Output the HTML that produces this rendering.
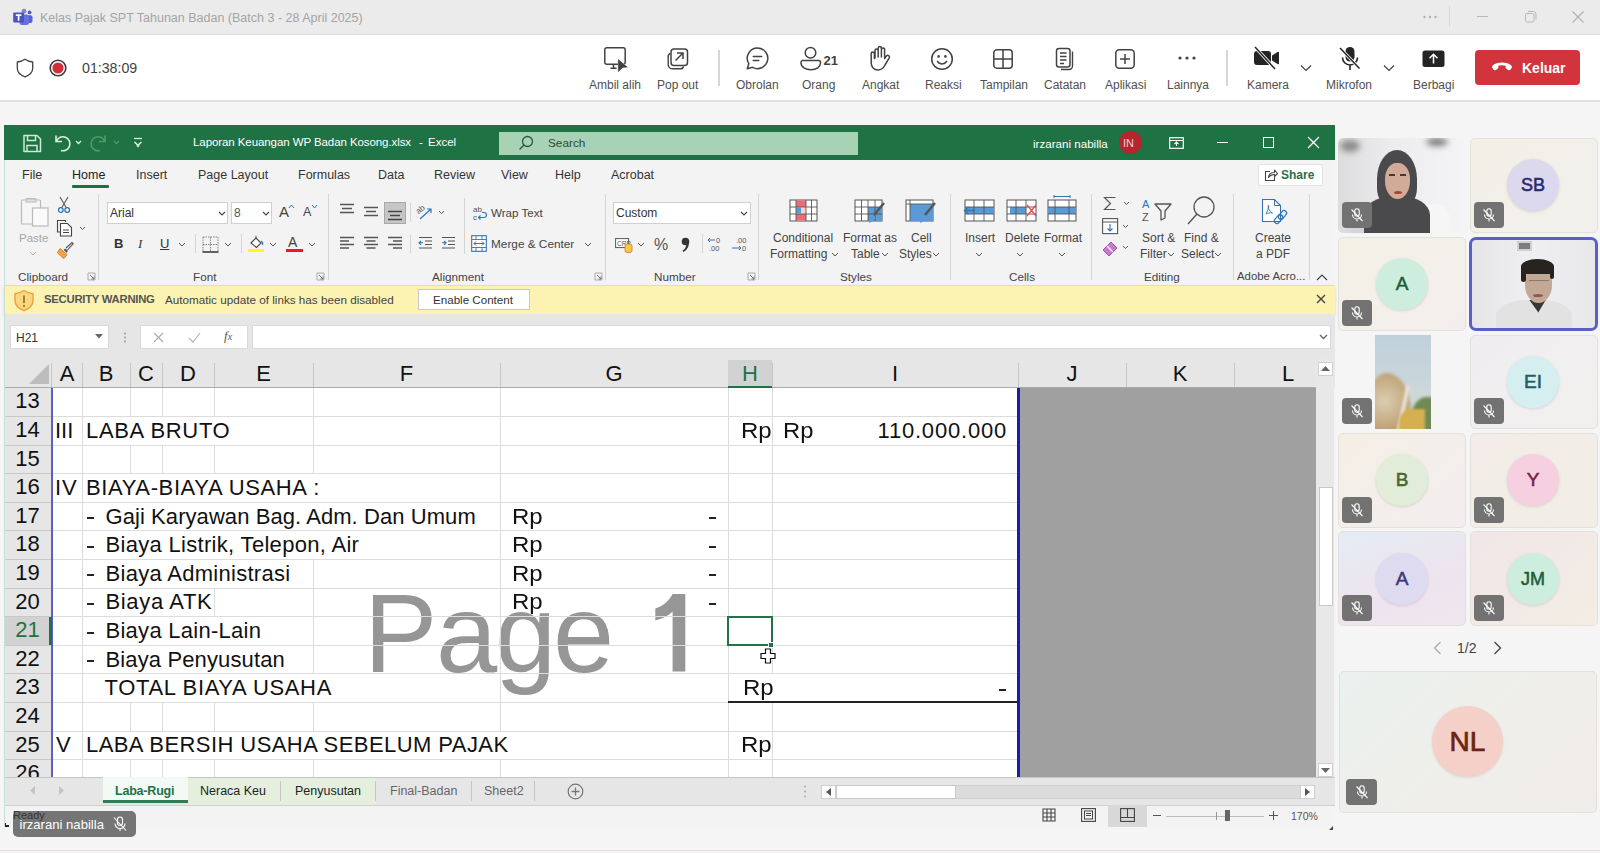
<!DOCTYPE html>
<html><head><meta charset="utf-8">
<style>
*{margin:0;padding:0;box-sizing:border-box}
html,body{width:1600px;height:853px;overflow:hidden;background:#f5f5f5;font-family:"Liberation Sans",sans-serif;position:relative}
.a{position:absolute}
.t{position:absolute;white-space:nowrap;line-height:1}
svg{position:absolute;overflow:visible}
</style></head><body>
<!-- Teams title bar -->
<div class="a" style="left:0;top:0;width:1600px;height:34px;background:#ebebeb"></div>
<!-- Teams toolbar -->
<div class="a" style="left:0;top:34px;width:1600px;height:68px;background:#fff;border-top:1px solid #dcdcdc;border-bottom:2px solid #e2e2e2"></div>


<!-- ===== TEAMS HEADER ===== -->
<svg style="left:12px;top:8px" width="22" height="18" viewBox="0 0 22 18">
 <circle cx="17.6" cy="4.4" r="1.9" fill="#5059c9"/>
 <rect x="14.5" y="7.3" width="6" height="7.6" rx="2" fill="#5a62d0"/>
 <circle cx="12" cy="3.2" r="2.4" fill="#7b83eb"/>
 <rect x="7.5" y="6.5" width="9.5" height="10.5" rx="2.5" fill="#6870e0"/>
 <rect x="1.2" y="4.5" width="10.8" height="10" rx="1" fill="#4b53bc"/>
 <path d="M3.8 7.2h5.6M6.6 7.2v5.6" stroke="#fff" stroke-width="1.7"/>
</svg>
<div class="t" style="left:40px;top:12px;font-size:12.5px;color:#a4a4a4">Kelas Pajak SPT Tahunan Badan (Batch 3 - 28 April 2025)</div>
<!-- window controls -->
<svg style="left:1423px;top:15px" width="16" height="4"><circle cx="1.5" cy="2" r="1.2" fill="#b0b0b0"/><circle cx="7" cy="2" r="1.2" fill="#b0b0b0"/><circle cx="12.5" cy="2" r="1.2" fill="#b0b0b0"/></svg>
<div class="a" style="left:1449px;top:6px;width:1px;height:21px;background:#d8d8d8"></div>
<div class="a" style="left:1477px;top:16px;width:11px;height:1px;background:#b8b8b8"></div>
<svg style="left:1524px;top:10px" width="14" height="14" viewBox="0 0 14 14"><rect x="1.5" y="3.5" width="8.5" height="8.5" rx="1.5" fill="none" stroke="#b8b8b8"/><path d="M4 1.5h5.5a2.5 2.5 0 0 1 2.5 2.5v5.5" fill="none" stroke="#b8b8b8"/></svg>
<svg style="left:1571px;top:10px" width="14" height="14" viewBox="0 0 14 14"><path d="M1.5 1.5l11 11M12.5 1.5l-11 11" stroke="#b0b0b0" stroke-width="1.1"/></svg>

<!-- left: shield, record, time -->
<svg style="left:16px;top:58px" width="18" height="20" viewBox="0 0 18 20"><path d="M9 1.2C6.5 3 4 3.8 1.3 4v6.3c0 4 3 6.8 7.7 8.5 4.7-1.7 7.7-4.5 7.7-8.5V4C14 3.8 11.5 3 9 1.2z" fill="none" stroke="#424242" stroke-width="1.3" stroke-linejoin="round"/></svg>
<svg style="left:48px;top:58px" width="20" height="20" viewBox="0 0 20 20"><circle cx="10" cy="10" r="7.8" fill="none" stroke="#3a3a3a" stroke-width="1.6"/><circle cx="10" cy="10" r="5.6" fill="#d32f3a"/></svg>
<div class="t" style="left:82px;top:61px;font-size:14.2px;color:#424242">01:38:09</div>

<!-- toolbar items -->
<!-- Ambil alih -->
<svg style="left:603px;top:46px" width="26" height="26" viewBox="0 0 26 26">
 <rect x="1.8" y="1.8" width="20.4" height="16.4" rx="2" fill="none" stroke="#424242" stroke-width="1.5"/>
 <path d="M7.5 22.3h6M10.5 18.5v3.8" stroke="#424242" stroke-width="1.5"/>
 <path d="M14.5 12L25.5 21.5l-5.3.3-4.8 4.6z" fill="#fff"/><path d="M15.3 13.6L24.2 21.1l-4.3.3-4.6 4.2z" fill="#424242" stroke="#424242" stroke-width="0.6" stroke-linejoin="round"/>
</svg>
<div class="t" style="left:589px;top:79px;font-size:12px;color:#505050">Ambil alih</div>
<!-- Pop out -->
<svg style="left:666px;top:47px" width="24" height="24" viewBox="0 0 24 24">
 <path d="M4.5 6.5a3 3 0 0 0-2.3 3v8.3a4 4 0 0 0 4 4h8.3a3 3 0 0 0 3-2.3" fill="none" stroke="#424242" stroke-width="1.4"/>
 <rect x="5" y="2" width="16.5" height="16.5" rx="3" fill="none" stroke="#424242" stroke-width="1.5"/>
 <path d="M9.5 13.5l7.5-7.5M11 6h6v6" fill="none" stroke="#424242" stroke-width="1.5"/>
</svg>
<div class="t" style="left:657px;top:79px;font-size:12px;color:#505050">Pop out</div>
<div class="a" style="left:718px;top:50px;width:1.5px;height:36px;background:#d6d6d6"></div>
<!-- Obrolan -->
<svg style="left:745px;top:46px" width="25" height="25" viewBox="0 0 25 25">
 <path d="M12.5 2a10.3 10.3 0 1 1-5 19.3L2.3 22.7l1.5-5A10.3 10.3 0 0 1 12.5 2z" fill="none" stroke="#424242" stroke-width="1.5" stroke-linejoin="round"/>
 <path d="M8.3 10.5h8.4M8.3 14.5h5.4" stroke="#424242" stroke-width="1.5" stroke-linecap="round"/>
</svg>
<div class="t" style="left:736px;top:79px;font-size:12px;color:#505050">Obrolan</div>
<!-- Orang -->
<svg style="left:800px;top:46px" width="22" height="25" viewBox="0 0 22 25">
 <circle cx="10.5" cy="6.8" r="5.3" fill="none" stroke="#424242" stroke-width="1.5"/>
 <path d="M2.5 14.5h16a2 2 0 0 1 2 2v0.5c0 4-4 6.8-9.5 6.8S1 21 1 17v-0.5a2 2 0 0 1 1.5-2z" fill="none" stroke="#424242" stroke-width="1.5"/>
</svg>
<div class="t" style="left:823.5px;top:53.5px;font-size:13px;font-weight:700;color:#424242">21</div>
<div class="t" style="left:802px;top:79px;font-size:12px;color:#505050">Orang</div>
<!-- Angkat -->
<svg style="left:869px;top:45px" width="22" height="27" viewBox="0 0 22 27">
 <path d="M6 13V5.5a1.6 1.6 0 0 1 3.2 0V12M9.2 12V3a1.6 1.6 0 0 1 3.2 0v9M12.4 12V4.5a1.6 1.6 0 0 1 3.2 0V13.5M15.6 13.5l1.8-2.6a1.7 1.7 0 0 1 2.8 1.9L16 20c-1.5 3-3.8 5-7 5-4 0-6.8-3-6.8-7V8.5a1.6 1.6 0 0 1 3.2 0v5" fill="none" stroke="#424242" stroke-width="1.5" stroke-linejoin="round" stroke-linecap="round"/>
</svg>
<div class="t" style="left:862px;top:79px;font-size:12px;color:#505050">Angkat</div>
<!-- Reaksi -->
<svg style="left:930px;top:47px" width="24" height="24" viewBox="0 0 24 24">
 <circle cx="12" cy="12" r="10.3" fill="none" stroke="#424242" stroke-width="1.5"/>
 <circle cx="8.6" cy="9.4" r="1.3" fill="#424242"/><circle cx="15.4" cy="9.4" r="1.3" fill="#424242"/>
 <path d="M7.5 14.5c1 1.6 2.6 2.4 4.5 2.4s3.5-.8 4.5-2.4" fill="none" stroke="#424242" stroke-width="1.5" stroke-linecap="round"/>
</svg>
<div class="t" style="left:925px;top:79px;font-size:12px;color:#505050">Reaksi</div>
<!-- Tampilan -->
<svg style="left:992px;top:48px" width="22" height="22" viewBox="0 0 22 22">
 <rect x="1.8" y="1.8" width="18.4" height="18.4" rx="3" fill="none" stroke="#424242" stroke-width="1.5"/>
 <path d="M11 2v18M2 11h18" stroke="#424242" stroke-width="1.5"/>
</svg>
<div class="t" style="left:980px;top:79px;font-size:12px;color:#505050">Tampilan</div>
<!-- Catatan -->
<svg style="left:1055px;top:47px" width="21" height="24" viewBox="0 0 21 24">
 <path d="M17.5 4.5v14.5a3.5 3.5 0 0 1-3.5 3.5H6" fill="none" stroke="#424242" stroke-width="1.4"/>
 <rect x="1.5" y="1.5" width="13.5" height="18.5" rx="2.5" fill="none" stroke="#424242" stroke-width="1.5"/>
 <path d="M5 6h6.5M5 9.5h6.5M5 13h6.5M5 16.5h4" stroke="#424242" stroke-width="1.3"/>
</svg>
<div class="t" style="left:1044px;top:79px;font-size:12px;color:#505050">Catatan</div>
<!-- Aplikasi -->
<svg style="left:1114px;top:48px" width="22" height="22" viewBox="0 0 22 22">
 <rect x="1.8" y="1.8" width="18.4" height="18.4" rx="3.5" fill="none" stroke="#424242" stroke-width="1.5"/>
 <path d="M11 6v10M6 11h10" stroke="#424242" stroke-width="1.5"/>
</svg>
<div class="t" style="left:1105px;top:79px;font-size:12px;color:#505050">Aplikasi</div>
<!-- Lainnya -->
<svg style="left:1178px;top:55px" width="18" height="6"><circle cx="2" cy="3" r="1.6" fill="#424242"/><circle cx="9" cy="3" r="1.6" fill="#424242"/><circle cx="16" cy="3" r="1.6" fill="#424242"/></svg>
<div class="t" style="left:1167px;top:79px;font-size:12px;color:#505050">Lainnya</div>
<div class="a" style="left:1226px;top:50px;width:1.5px;height:36px;background:#d6d6d6"></div>
<!-- Kamera -->
<svg style="left:1253px;top:46px" width="27" height="24" viewBox="0 0 27 24">
 <path d="M4 5h11a3 3 0 0 1 3 3v8a3 3 0 0 1-3 3H4a3 3 0 0 1-3-3V8a3 3 0 0 1 3-3zM19 9.5l5.5-3.5a1 1 0 0 1 1.5 .8v10.4a1 1 0 0 1-1.5 .8L19 14.5z" fill="#242424"/>
 <path d="M2 1l20 22" stroke="#fff" stroke-width="3.2"/>
 <path d="M2 1l20 22" stroke="#242424" stroke-width="1.5"/>
</svg>
<div class="t" style="left:1247px;top:79px;font-size:12px;color:#505050">Kamera</div>
<svg style="left:1300px;top:64px" width="12" height="8"><path d="M1 1.5l5 5 5-5" fill="none" stroke="#424242" stroke-width="1.2"/></svg>
<!-- Mikrofon -->
<svg style="left:1338px;top:46px" width="24" height="25" viewBox="0 0 24 25">
 <rect x="7.5" y="1" width="9" height="14.5" rx="4.5" fill="#242424"/>
 <path d="M4.5 11.5a7.5 7.5 0 0 0 15 0M12 19v5" fill="none" stroke="#242424" stroke-width="1.6"/>
 <path d="M2 2l19.5 20.5" stroke="#fff" stroke-width="3.2"/>
 <path d="M2 2l19.5 20.5" stroke="#242424" stroke-width="1.5"/>
</svg>
<div class="t" style="left:1326px;top:79px;font-size:12px;color:#505050">Mikrofon</div>
<svg style="left:1383px;top:64px" width="12" height="8"><path d="M1 1.5l5 5 5-5" fill="none" stroke="#424242" stroke-width="1.2"/></svg>
<!-- Berbagi -->
<svg style="left:1422px;top:50px" width="23" height="18" viewBox="0 0 23 18">
 <rect x="0.5" y="0.5" width="22" height="16.5" rx="2.5" fill="#242424"/>
 <path d="M11.5 13.5V4.5M7.5 8.3l4-4 4 4" fill="none" stroke="#fff" stroke-width="1.5"/>
</svg>
<div class="t" style="left:1413px;top:79px;font-size:12px;color:#505050">Berbagi</div>
<!-- Keluar -->
<div class="a" style="left:1475px;top:50px;width:105px;height:35px;background:#d1343b;border-radius:4px"></div>
<svg style="left:1491px;top:61px" width="22" height="12" viewBox="0 0 22 12">
 <path d="M11 1.5c-4 0-7.5 1.2-9.3 3-.8.8-.8 2 0 3l1 1.2c.6.6 1.5.7 2.2.2l1.8-1.2c.6-.4.8-1 .7-1.7L7.2 4.8C8.4 4.4 9.6 4.2 11 4.2s2.6.2 3.8.6l-.2 1.2c-.1.7.1 1.3.7 1.7l1.8 1.2c.7.5 1.6.4 2.2-.2l1-1.2c.8-1 .8-2.2 0-3-1.8-1.8-5.3-3-9.3-3z" fill="#fff"/>
</svg>
<div class="t" style="left:1522px;top:61px;font-size:14px;font-weight:700;color:#fff">Keluar</div>

<!-- Excel window -->
<div class="a" style="left:4px;top:125px;width:1331px;height:35px;background:#1f7244"></div>
<div class="a" style="left:4px;top:160px;width:1331px;height:125px;background:#f3f3f3"></div>
<div class="a" style="left:4px;top:285px;width:1331px;height:29px;background:#fcf3b3;border-top:1px solid #e9dfa2;box-shadow:0 2px 3px rgba(0,0,0,0.13)"></div>
<div class="a" style="left:4px;top:314px;width:1331px;height:46px;background:#e6e6e6"></div>
<div class="a" style="left:4px;top:360px;width:1331px;height:28px;background:#e6e6e6"></div>


<!-- ===== EXCEL TITLE BAR ===== -->
<svg style="left:22px;top:134px" width="20" height="19" viewBox="0 0 20 19">
 <path d="M2 1.5h13l3.5 3.5v12.5h-16.5z" fill="none" stroke="#cfe8d8" stroke-width="1.5" stroke-linejoin="round"/>
 <path d="M5.5 1.5v5h8v-5M5 17.5v-6h10v6" fill="none" stroke="#cfe8d8" stroke-width="1.5"/>
</svg>
<svg style="left:53px;top:134px" width="34" height="18" viewBox="0 0 34 18">
 <path d="M3 1.5v6h6" fill="none" stroke="#dcefe3" stroke-width="1.6"/>
 <path d="M3.5 7A7 7 0 1 1 8 16.5" fill="none" stroke="#dcefe3" stroke-width="1.6"/>
 <path d="M23 7l2.5 2.5 2.5-2.5" fill="none" stroke="#dcefe3" stroke-width="1.3"/>
</svg>
<svg style="left:91px;top:134px" width="34" height="18" viewBox="0 0 34 18">
 <path d="M14 1.5v6h-6" fill="none" stroke="#4f9a6d" stroke-width="1.6"/>
 <path d="M13.5 7A7 7 0 1 0 9 16.5" fill="none" stroke="#4f9a6d" stroke-width="1.6"/>
 <path d="M23 7l2.5 2.5 2.5-2.5" fill="none" stroke="#4f9a6d" stroke-width="1.3"/>
</svg>
<svg style="left:133px;top:137px" width="10" height="12" viewBox="0 0 10 12"><path d="M1 1.5h8" stroke="#dcefe3" stroke-width="1.3"/><path d="M1.5 5l3.5 3.3L8.5 5" fill="none" stroke="#dcefe3" stroke-width="1.5"/><path d="M3 8.5h4L5 10.5z" fill="#dcefe3"/></svg>
<div class="t" style="left:193px;top:137px;font-size:11.5px;letter-spacing:-0.08px;color:#fff">Laporan Keuangan WP Badan Kosong.xlsx</div><div class="t" style="left:419px;top:137px;font-size:11.5px;color:#fff">-</div><div class="t" style="left:428px;top:137px;font-size:11.5px;color:#fff">Excel</div>
<div class="a" style="left:499px;top:132px;width:359px;height:23px;background:#a8d2b6"></div>
<svg style="left:518px;top:135px" width="16" height="16" viewBox="0 0 16 16"><circle cx="9.5" cy="6.5" r="5" fill="none" stroke="#2d5a3e" stroke-width="1.3"/><path d="M6 10l-4.5 4.5" stroke="#2d5a3e" stroke-width="1.4"/></svg>
<div class="t" style="left:548px;top:138px;font-size:11.8px;color:#2a4a36">Search</div>
<div class="t" style="left:1033px;top:138px;font-size:11.6px;color:#fff">irzarani nabilla</div>
<div class="a" style="left:1119px;top:131px;width:23px;height:23px;border-radius:50%;background:#b3262e"></div>
<div class="t" style="left:1123px;top:138px;font-size:11px;color:#f4d0d2">IN</div>
<svg style="left:1169px;top:137px" width="15" height="12" viewBox="0 0 15 12"><rect x="0.7" y="0.7" width="13.6" height="10.6" fill="none" stroke="#fff" stroke-width="1.2"/><path d="M1 3.5h13M7.5 9V5M5.5 7l2-2 2 2" fill="none" stroke="#fff" stroke-width="1.1"/></svg>
<div class="a" style="left:1217px;top:142px;width:11px;height:1.3px;background:#fff"></div>
<div class="a" style="left:1263px;top:137px;width:11px;height:11px;border:1.3px solid #fff"></div>
<svg style="left:1307px;top:136px" width="13" height="13" viewBox="0 0 13 13"><path d="M1 1l11 11M12 1l-11 11" stroke="#fff" stroke-width="1.3"/></svg>

<!-- ===== RIBBON TABS ===== -->
<div class="t" style="left:22px;top:169px;font-size:12.5px;color:#333">File</div>
<div class="t" style="left:72px;top:169px;font-size:12.5px;color:#222">Home</div>
<div class="a" style="left:72px;top:185px;width:37px;height:3px;background:#1e6f42;border-radius:1px"></div>
<div class="t" style="left:136px;top:169px;font-size:12.5px;color:#333">Insert</div>
<div class="t" style="left:198px;top:169px;font-size:12.5px;color:#333">Page Layout</div>
<div class="t" style="left:298px;top:169px;font-size:12.5px;color:#333">Formulas</div>
<div class="t" style="left:378px;top:169px;font-size:12.5px;color:#333">Data</div>
<div class="t" style="left:434px;top:169px;font-size:12.5px;color:#333">Review</div>
<div class="t" style="left:501px;top:169px;font-size:12.5px;color:#333">View</div>
<div class="t" style="left:555px;top:169px;font-size:12.5px;color:#333">Help</div>
<div class="t" style="left:611px;top:169px;font-size:12.5px;color:#333">Acrobat</div>
<div class="a" style="left:1258px;top:164px;width:65px;height:22px;background:#fff;border:1px solid #e3e3e3;border-radius:2px"></div>
<svg style="left:1264px;top:168px" width="14" height="14" viewBox="0 0 14 14"><path d="M6 3.5H1.5v9h9V9" fill="none" stroke="#444" stroke-width="1.1"/><path d="M4.5 9.5c0-3 2-5 6-5V2l3 3.5-3 3V6.5c-2.5 0-4.5 1-6 3z" fill="none" stroke="#444" stroke-width="1.1" stroke-linejoin="round"/></svg>
<div class="t" style="left:1281px;top:169px;font-size:12px;font-weight:700;color:#2c6e49">Share</div>


<!-- ===== RIBBON CONTENT ===== -->
<!-- Clipboard -->
<svg style="left:20px;top:196px" width="30" height="32" viewBox="0 0 30 32">
 <rect x="1.5" y="4" width="19" height="24" rx="1" fill="#f6f6f6" stroke="#b9b9b9" stroke-width="1.2"/>
 <path d="M7 4V2.5h8V4" fill="none" stroke="#b9b9b9" stroke-width="1.2"/><rect x="6" y="3" width="10" height="3" fill="#e0e0e0" stroke="#b9b9b9"/>
 <rect x="12.5" y="12" width="15.5" height="18" fill="#fafafa" stroke="#b9b9b9" stroke-width="1.2"/>
</svg>
<div class="t" style="left:19px;top:233px;font-size:11.5px;color:#a6a6a6">Paste</div>
<svg style="left:29px;top:251px" width="8" height="5"><path d="M1 1l3 3 3-3" fill="none" stroke="#b0b0b0" stroke-width="1"/></svg>
<svg style="left:57px;top:196px" width="14" height="17" viewBox="0 0 14 17"><path d="M3 1l6.5 11M11 1L4.5 12" stroke="#555" stroke-width="1.1"/><circle cx="3.8" cy="14" r="2.3" fill="none" stroke="#2e75b6" stroke-width="1.3"/><circle cx="10.2" cy="14" r="2.3" fill="none" stroke="#2e75b6" stroke-width="1.3"/></svg>
<svg style="left:56px;top:219px" width="30" height="18" viewBox="0 0 30 18"><path d="M4 13H1.5V1.5h8V3" fill="none" stroke="#444" stroke-width="1.1"/><path d="M4.5 4.5h7l4 4v8.5h-11z" fill="#fff" stroke="#444" stroke-width="1.1"/><path d="M7 11h6M7 13.5h6" stroke="#444"/><path d="M24 8l2.5 2.5 2.5-2.5" fill="none" stroke="#555" stroke-width="1"/></svg>
<svg style="left:56px;top:242px" width="18" height="18" viewBox="0 0 18 18"><path d="M10 6l6-5.5 1.2 1.2L11.5 8" fill="none" stroke="#555" stroke-width="1.1"/><path d="M4 6.5l7 6-3 4c-2-1-5-4-6.5-6z" fill="#f3a447" stroke="#d9822b" stroke-width="1"/><path d="M9.5 6.5l2.5 2.5-1.5 1.8-3-3z" fill="#555"/></svg>
<div class="a" style="left:98px;top:194px;width:1px;height:86px;background:#d4d4d4"></div>
<div class="t" style="left:18px;top:271px;font-size:11.7px;color:#444">Clipboard</div>
<svg style="left:87px;top:272px" width="9" height="9" viewBox="0 0 9 9"><path d="M1 8V1h7v7z" fill="none" stroke="#999" stroke-width="0.8"/><path d="M3 3l4 4M4.5 7H7V4.5" fill="none" stroke="#666" stroke-width="0.9"/></svg>

<!-- Font -->
<div class="a" style="left:107px;top:202px;width:121px;height:22px;background:#fff;border:1px solid #d0d0d0"></div>
<div class="t" style="left:110px;top:207px;font-size:12px;color:#333">Arial</div>
<svg style="left:218px;top:211px" width="8" height="5"><path d="M1 1l3 3 3-3" fill="none" stroke="#444" stroke-width="1.1"/></svg>
<div class="a" style="left:231px;top:202px;width:41px;height:22px;background:#fff;border:1px solid #d0d0d0"></div>
<div class="t" style="left:234px;top:207px;font-size:12px;color:#555">8</div>
<svg style="left:262px;top:211px" width="8" height="5"><path d="M1 1l3 3 3-3" fill="none" stroke="#444" stroke-width="1.1"/></svg>
<div class="t" style="left:279px;top:204px;font-size:15px;color:#444">A</div>
<svg style="left:288px;top:204px" width="7" height="5"><path d="M1 4l2.5-3 2.5 3" fill="none" stroke="#2e75b6" stroke-width="1"/></svg>
<div class="t" style="left:303px;top:206px;font-size:12.5px;color:#444">A</div>
<svg style="left:311px;top:204px" width="7" height="5"><path d="M1 1l2.5 3 2.5-3" fill="none" stroke="#2e75b6" stroke-width="1"/></svg>
<div class="t" style="left:114px;top:237px;font-size:13px;font-weight:700;color:#333">B</div>
<div class="t" style="left:138px;top:237px;font-size:13px;font-style:italic;color:#333;font-family:'Liberation Serif'">I</div>
<div class="t" style="left:160px;top:237px;font-size:13px;color:#333;text-decoration:underline">U</div>
<svg style="left:178px;top:242px" width="8" height="5"><path d="M1 1l3 3 3-3" fill="none" stroke="#555" stroke-width="1"/></svg>
<div class="a" style="left:195px;top:234px;width:1px;height:19px;background:#d4d4d4"></div>
<svg style="left:202px;top:236px" width="17" height="17" viewBox="0 0 17 17"><path d="M1 1h15v15M1 1v15M8.5 1v15M1 8.5h15" fill="none" stroke="#777" stroke-width="0.9" stroke-dasharray="1.5 1"/><path d="M0.5 16h16" stroke="#222" stroke-width="1.4"/></svg>
<svg style="left:224px;top:242px" width="8" height="5"><path d="M1 1l3 3 3-3" fill="none" stroke="#555" stroke-width="1"/></svg>
<div class="a" style="left:241px;top:234px;width:1px;height:19px;background:#d4d4d4"></div>
<svg style="left:248px;top:235px" width="17" height="18" viewBox="0 0 17 18"><path d="M3 8l5-5 5 5-4.5 4.5z" fill="#fff" stroke="#444" stroke-width="1.1"/><path d="M8 3V0.8" stroke="#444"/><path d="M13 6c1.5 1 2 2.5 1.5 4" fill="none" stroke="#2e75b6" stroke-width="1.2"/><rect x="0" y="14" width="16" height="3" fill="#ffff00"/></svg>
<svg style="left:269px;top:242px" width="8" height="5"><path d="M1 1l3 3 3-3" fill="none" stroke="#555" stroke-width="1"/></svg>
<div class="t" style="left:288px;top:235px;font-size:14px;color:#444">A</div>
<div class="a" style="left:286px;top:249px;width:17px;height:3px;background:#e51c23"></div>
<svg style="left:308px;top:242px" width="8" height="5"><path d="M1 1l3 3 3-3" fill="none" stroke="#555" stroke-width="1"/></svg>
<div class="t" style="left:193px;top:271px;font-size:11.7px;color:#444">Font</div>
<svg style="left:316px;top:272px" width="9" height="9" viewBox="0 0 9 9"><path d="M1 8V1h7v7z" fill="none" stroke="#999" stroke-width="0.8"/><path d="M3 3l4 4M4.5 7H7V4.5" fill="none" stroke="#666" stroke-width="0.9"/></svg>
<div class="a" style="left:328px;top:194px;width:1px;height:86px;background:#d4d4d4"></div>

<!-- Alignment -->
<svg style="left:339px;top:203px" width="16" height="11"><path d="M1 1.5h14M3 5.5h10M1 9.5h14" stroke="#555" stroke-width="1.3"/></svg>
<svg style="left:363px;top:206px" width="16" height="11"><path d="M1 1.5h14M3 5.5h10M1 9.5h14" stroke="#555" stroke-width="1.3"/></svg>
<div class="a" style="left:384px;top:202px;width:22px;height:22px;background:#c6c6c6;border:1px solid #a8a8a8"></div>
<svg style="left:387px;top:210px" width="16" height="12"><path d="M1 1.5h14M3 5.5h10M1 9.5h14" stroke="#444" stroke-width="1.3"/></svg>
<div class="a" style="left:410px;top:203px;width:1px;height:19px;background:#d4d4d4"></div>
<svg style="left:416px;top:203px" width="30" height="18" viewBox="0 0 30 18"><text x="1" y="9" font-size="8" fill="#555" font-family="Liberation Sans" transform="rotate(-40 5 8)">ab</text><path d="M4 16l11-10M11 6h4v4" fill="none" stroke="#2e75b6" stroke-width="1.2"/><path d="M23 8l2.5 2.5 2.5-2.5" fill="none" stroke="#555" stroke-width="1"/></svg>
<div class="a" style="left:464px;top:198px;width:1px;height:56px;background:#d4d4d4"></div>
<svg style="left:473px;top:205px" width="15" height="17" viewBox="0 0 15 17"><text x="0" y="7" font-size="8" fill="#555" font-family="Liberation Sans">ab</text><text x="0" y="15" font-size="8" fill="#555" font-family="Liberation Sans">c</text><path d="M6 12.5h5a2.5 2.5 0 0 0 0-5H9M7.5 10.5l-2 2 2 2" fill="none" stroke="#2e75b6" stroke-width="1.1"/></svg>
<div class="t" style="left:491px;top:207px;font-size:11.6px;color:#444">Wrap Text</div>
<svg style="left:339px;top:236px" width="16" height="14"><path d="M1 1.5h14M1 5h9M1 8.5h14M1 12h9" stroke="#555" stroke-width="1.3"/></svg>
<svg style="left:363px;top:236px" width="16" height="14"><path d="M1 1.5h14M3.5 5h9M1 8.5h14M3.5 12h9" stroke="#555" stroke-width="1.3"/></svg>
<svg style="left:387px;top:236px" width="16" height="14"><path d="M1 1.5h14M6 5h9M1 8.5h14M6 12h9" stroke="#555" stroke-width="1.3"/></svg>
<div class="a" style="left:410px;top:235px;width:1px;height:18px;background:#d4d4d4"></div>
<svg style="left:418px;top:236px" width="15" height="14"><path d="M1 1.5h13M7 5h7M7 8.5h7M1 12h13" stroke="#555" stroke-width="1.2"/><path d="M5 6.8H1M3 4.8l-2 2 2 2" fill="none" stroke="#2e75b6" stroke-width="1.1"/></svg>
<svg style="left:441px;top:236px" width="15" height="14"><path d="M1 1.5h13M7 5h7M7 8.5h7M1 12h13" stroke="#555" stroke-width="1.2"/><path d="M1 6.8h4M3 4.8l2 2-2 2" fill="none" stroke="#2e75b6" stroke-width="1.1"/></svg>
<div class="a" style="left:464px;top:235px;width:1px;height:18px;background:#d4d4d4"></div>
<svg style="left:471px;top:235px" width="16" height="17" viewBox="0 0 16 17"><rect x="0.7" y="0.7" width="14.6" height="15.6" fill="#fff" stroke="#2e75b6" stroke-width="1.1"/><path d="M1 4.5h14M1 12.5h14M5 1v3.5M11 1v3.5M5 12.5v4M11 12.5v4" stroke="#2e75b6" stroke-width="0.9"/><path d="M3 8.5h10M5 6.5l-2 2 2 2M11 6.5l2 2-2 2" fill="none" stroke="#2e75b6" stroke-width="1"/></svg>
<div class="t" style="left:491px;top:239px;font-size:11.8px;color:#444">Merge &amp; Center</div>
<svg style="left:584px;top:242px" width="8" height="5"><path d="M1 1l3 3 3-3" fill="none" stroke="#555" stroke-width="1"/></svg>
<div class="t" style="left:432px;top:271px;font-size:11.7px;color:#444">Alignment</div>
<svg style="left:594px;top:272px" width="9" height="9" viewBox="0 0 9 9"><path d="M1 8V1h7v7z" fill="none" stroke="#999" stroke-width="0.8"/><path d="M3 3l4 4M4.5 7H7V4.5" fill="none" stroke="#666" stroke-width="0.9"/></svg>
<div class="a" style="left:605px;top:194px;width:1px;height:86px;background:#d4d4d4"></div>

<!-- Number -->
<div class="a" style="left:613px;top:202px;width:138px;height:22px;background:#fff;border:1px solid #d0d0d0"></div>
<div class="t" style="left:616px;top:207px;font-size:12px;color:#333">Custom</div>
<svg style="left:740px;top:211px" width="8" height="5"><path d="M1 1l3 3 3-3" fill="none" stroke="#444" stroke-width="1.1"/></svg>
<svg style="left:615px;top:237px" width="18" height="16" viewBox="0 0 18 16"><rect x="0.6" y="1.6" width="13" height="9" fill="#fff" stroke="#555" stroke-width="1"/><text x="2" y="9" font-size="6.5" fill="#555" font-family="Liberation Sans">CRP</text><rect x="10" y="7" width="7" height="8.5" rx="2" fill="#f7c94b" stroke="#d9822b" stroke-width="0.9"/></svg>
<svg style="left:637px;top:242px" width="8" height="5"><path d="M1 1l3 3 3-3" fill="none" stroke="#555" stroke-width="1"/></svg>
<div class="t" style="left:654px;top:237px;font-size:16px;color:#555">%</div>
<svg style="left:681px;top:237px" width="10" height="16" viewBox="0 0 10 16"><circle cx="4.5" cy="4.5" r="3.8" fill="#333"/><path d="M7.8 5c.5 4-1.5 8-5.5 10l-.8-1.2c2.5-1.5 3.8-4 3.8-6.5z" fill="#333"/></svg>
<div class="a" style="left:702px;top:234px;width:1px;height:19px;background:#d4d4d4"></div>
<svg style="left:707px;top:236px" width="18" height="17" viewBox="0 0 18 17"><text x="9" y="7" font-size="7.5" fill="#555" font-family="Liberation Sans">0</text><text x="2" y="15" font-size="7.5" fill="#555" font-family="Liberation Sans">.00</text><path d="M8 4H1M3 2L1 4l2 2" fill="none" stroke="#2e75b6" stroke-width="1"/></svg>
<svg style="left:731px;top:236px" width="18" height="17" viewBox="0 0 18 17"><text x="5" y="7" font-size="7.5" fill="#555" font-family="Liberation Sans">.00</text><text x="11" y="15" font-size="7.5" fill="#555" font-family="Liberation Sans">0</text><path d="M1 12h9M8 10l2 2-2 2" fill="none" stroke="#2e75b6" stroke-width="1"/></svg>
<div class="t" style="left:654px;top:271px;font-size:11.7px;color:#444">Number</div>
<svg style="left:747px;top:272px" width="9" height="9" viewBox="0 0 9 9"><path d="M1 8V1h7v7z" fill="none" stroke="#999" stroke-width="0.8"/><path d="M3 3l4 4M4.5 7H7V4.5" fill="none" stroke="#666" stroke-width="0.9"/></svg>
<div class="a" style="left:758px;top:194px;width:1px;height:86px;background:#d4d4d4"></div>

<!-- Styles -->
<svg style="left:789px;top:199px" width="30" height="24" viewBox="0 0 30 24">
 <rect x="1" y="1" width="27" height="21" fill="#fff" stroke="#555" stroke-width="1"/>
 <rect x="7" y="1.5" width="10" height="6.5" fill="#ef6b73"/><rect x="7" y="15" width="10" height="6.5" fill="#ef6b73"/><rect x="7" y="8.5" width="5" height="6" fill="#5b9bd5"/><rect x="12" y="8.5" width="5" height="6" fill="#ef6b73" opacity=".3"/>
 <path d="M1 8h27M1 15h27M7 1v21M17 1v21M22.5 1v21" stroke="#555" stroke-width="0.9"/>
</svg>
<div class="t" style="left:773px;top:232px;font-size:12px;color:#444">Conditional</div>
<div class="t" style="left:770px;top:248px;font-size:12px;color:#444">Formatting</div>
<svg style="left:831px;top:252px" width="8" height="5"><path d="M1 1l3 3 3-3" fill="none" stroke="#555" stroke-width="1"/></svg>
<svg style="left:854px;top:199px" width="32" height="26" viewBox="0 0 32 26">
 <rect x="1" y="1" width="27" height="21" fill="#fff" stroke="#555" stroke-width="1"/>
 <rect x="14" y="8" width="14" height="14" fill="#5b9bd5"/>
 <path d="M1 8h27M1 15h27M7.5 1v21M14 1v21M21 1v21" stroke="#555" stroke-width="0.9"/>
 <path d="M30 4l-10 12" stroke="#555" stroke-width="2.5"/><path d="M19 16c-2 1-3 3-4 8 3-1 6-3 6-6z" fill="#5b9bd5"/>
</svg>
<div class="t" style="left:843px;top:232px;font-size:12px;color:#444">Format as</div>
<div class="t" style="left:851px;top:248px;font-size:12px;color:#444">Table</div>
<svg style="left:881px;top:252px" width="8" height="5"><path d="M1 1l3 3 3-3" fill="none" stroke="#555" stroke-width="1"/></svg>
<svg style="left:905px;top:199px" width="32" height="26" viewBox="0 0 32 26">
 <rect x="1" y="1" width="27" height="21" fill="#fff" stroke="#555" stroke-width="1"/>
 <rect x="5" y="5" width="23" height="17" fill="#5b9bd5"/>
 <path d="M1 5h27M5 1v21" stroke="#555" stroke-width="0.9"/>
 <path d="M30 4l-10 12" stroke="#555" stroke-width="2.5"/><path d="M19 16c-2 1-3 3-4 8 3-1 6-3 6-6z" fill="#5b9bd5"/>
</svg>
<div class="t" style="left:911px;top:232px;font-size:12px;color:#444">Cell</div>
<div class="t" style="left:899px;top:248px;font-size:12px;color:#444">Styles</div>
<svg style="left:932px;top:252px" width="8" height="5"><path d="M1 1l3 3 3-3" fill="none" stroke="#555" stroke-width="1"/></svg>
<div class="t" style="left:840px;top:271px;font-size:11.7px;color:#444">Styles</div>
<div class="a" style="left:950px;top:194px;width:1px;height:86px;background:#d4d4d4"></div>

<!-- Cells -->
<svg style="left:963px;top:199px" width="34" height="24" viewBox="0 0 34 24">
 <rect x="2" y="1" width="29" height="21" fill="#fff" stroke="#555" stroke-width="1"/>
 <rect x="2" y="8" width="29" height="7" fill="#5b9bd5"/>
 <path d="M2 8h29M2 15h29M11 1v21M21 1v21" stroke="#555" stroke-width="0.9"/>
 <path d="M12 11.5H2M5.5 8l-4 3.5 4 3.5" fill="none" stroke="#2e75b6" stroke-width="1.3"/>
</svg>
<div class="t" style="left:965px;top:232px;font-size:12px;color:#444">Insert</div>
<svg style="left:975px;top:252px" width="8" height="5"><path d="M1 1l3 3 3-3" fill="none" stroke="#555" stroke-width="1"/></svg>
<svg style="left:1006px;top:199px" width="32" height="24" viewBox="0 0 32 24">
 <rect x="1" y="1" width="29" height="21" fill="#fff" stroke="#555" stroke-width="1"/>
 <rect x="4" y="8" width="16" height="7" fill="#5b9bd5"/>
 <path d="M1 8h29M1 15h29M10 1v21M20 1v21" stroke="#555" stroke-width="0.9"/>
 <path d="M21 6l9 11M30 6l-9 11" stroke="#e8484f" stroke-width="1.3"/>
</svg>
<div class="t" style="left:1005px;top:232px;font-size:12px;color:#444">Delete</div>
<svg style="left:1016px;top:252px" width="8" height="5"><path d="M1 1l3 3 3-3" fill="none" stroke="#555" stroke-width="1"/></svg>
<svg style="left:1047px;top:195px" width="31" height="28" viewBox="0 0 31 28">
 <path d="M7 1.5h16M7 0v3M23 0v3" stroke="#2e75b6" stroke-width="1"/>
 <rect x="1" y="5" width="28" height="21" fill="#fff" stroke="#555" stroke-width="1"/>
 <rect x="1" y="12" width="28" height="7" fill="#5b9bd5"/>
 <path d="M1 12h28M1 19h28M8 5v21M22 5v21" stroke="#555" stroke-width="0.9"/>
</svg>
<div class="t" style="left:1044px;top:232px;font-size:12px;color:#444">Format</div>
<svg style="left:1058px;top:252px" width="8" height="5"><path d="M1 1l3 3 3-3" fill="none" stroke="#555" stroke-width="1"/></svg>
<div class="t" style="left:1009px;top:271px;font-size:11.7px;color:#444">Cells</div>
<div class="a" style="left:1091px;top:194px;width:1px;height:86px;background:#d4d4d4"></div>

<!-- Editing -->
<svg style="left:1103px;top:196px" width="28" height="15" viewBox="0 0 28 15"><path d="M12.5 1.5H1.5l6 6-6 6h11" fill="none" stroke="#555" stroke-width="1.2"/><path d="M21 6l2.5 2.5 2.5-2.5" fill="none" stroke="#555" stroke-width="1"/></svg>
<svg style="left:1102px;top:218px" width="28" height="16" viewBox="0 0 28 16"><rect x="0.6" y="0.6" width="15" height="15" fill="#fff" stroke="#555" stroke-width="1.1"/><path d="M0.6 4h15" stroke="#555"/><path d="M8 6v7M5.5 10.5L8 13l2.5-2.5" fill="none" stroke="#2e75b6" stroke-width="1.1"/><path d="M21 7l2.5 2.5 2.5-2.5" fill="none" stroke="#555" stroke-width="1"/></svg>
<svg style="left:1102px;top:240px" width="28" height="16" viewBox="0 0 28 16"><path d="M1 10l8-8 6 6-8 8z" fill="#c879d2" stroke="#9b4aa8" stroke-width="0.9"/><path d="M5 6l6 6" stroke="#fff" stroke-width="1.2"/><path d="M21 6l2.5 2.5 2.5-2.5" fill="none" stroke="#555" stroke-width="1"/></svg>
<svg style="left:1141px;top:197px" width="34" height="27" viewBox="0 0 34 27">
 <text x="1" y="11" font-size="11" fill="#2e75b6" font-family="Liberation Sans">A</text>
 <text x="1" y="24" font-size="11" fill="#555" font-family="Liberation Sans">Z</text>
 <path d="M14 7h16l-6 7v7l-4 2v-9z" fill="none" stroke="#555" stroke-width="1.3" stroke-linejoin="round"/>
</svg>
<div class="t" style="left:1142px;top:232px;font-size:12px;color:#444">Sort &amp;</div>
<div class="t" style="left:1140px;top:248px;font-size:12px;color:#444">Filter</div>
<svg style="left:1167px;top:252px" width="8" height="5"><path d="M1 1l3 3 3-3" fill="none" stroke="#555" stroke-width="1"/></svg>
<svg style="left:1186px;top:196px" width="32" height="30" viewBox="0 0 32 30"><circle cx="18" cy="11" r="10" fill="none" stroke="#555" stroke-width="1.3"/><path d="M11 18L2 28" stroke="#555" stroke-width="1.4"/></svg>
<div class="t" style="left:1184px;top:232px;font-size:12px;color:#444">Find &amp;</div>
<div class="t" style="left:1181px;top:248px;font-size:12px;color:#444">Select</div>
<svg style="left:1214px;top:252px" width="8" height="5"><path d="M1 1l3 3 3-3" fill="none" stroke="#555" stroke-width="1"/></svg>
<div class="t" style="left:1144px;top:271px;font-size:11.7px;color:#444">Editing</div>
<div class="a" style="left:1233px;top:194px;width:1px;height:86px;background:#d4d4d4"></div>

<!-- Adobe -->
<svg style="left:1261px;top:198px" width="28" height="30" viewBox="0 0 28 30">
 <path d="M1.5 1.5h12l6 6v16h-18z" fill="#fff" stroke="#2e75b6" stroke-width="1.1"/><path d="M13.5 1.5v6h6" fill="none" stroke="#2e75b6" stroke-width="1"/>
 <path d="M5 16c2-4 3-7 2.5-9-1 2 .5 6 4 8-2-.5-5 0-6.5 1z" fill="none" stroke="#2e75b6" stroke-width="0.9"/>
 <rect x="15" y="16" width="5" height="10" rx="2.5" transform="rotate(40 17.5 21)" fill="none" stroke="#2e75b6" stroke-width="1.2"/>
 <rect x="19" y="12" width="5" height="10" rx="2.5" transform="rotate(40 21.5 17)" fill="none" stroke="#2e75b6" stroke-width="1.2"/>
</svg>
<div class="t" style="left:1255px;top:232px;font-size:12px;color:#444">Create</div>
<div class="t" style="left:1256px;top:248px;font-size:12px;color:#444">a PDF</div>
<div class="t" style="left:1237px;top:271px;font-size:11.4px;color:#444">Adobe Acro...</div>
<div class="a" style="left:1309px;top:194px;width:1px;height:86px;background:#d4d4d4"></div>
<svg style="left:1316px;top:274px" width="12" height="7"><path d="M1 6l5-5 5 5" fill="none" stroke="#444" stroke-width="1.2"/></svg>

<!-- ===== SECURITY BAR ===== -->
<svg style="left:13px;top:289px" width="22" height="23" viewBox="0 0 22 23"><path d="M11 1.5c-3 2-6 3-9 3.2v6.5c0 5 3.5 8.5 9 10.5 5.5-2 9-5.5 9-10.5V4.7C17 4.5 14 3.5 11 1.5z" fill="#fcd580" stroke="#e8a33d" stroke-width="1.4"/><path d="M11 6.5v7.5" stroke="#8a6d1a" stroke-width="1.6"/><circle cx="11" cy="17" r="1" fill="#8a6d1a"/></svg>
<div class="t" style="left:44px;top:294px;font-size:11.3px;color:#555;font-weight:700;letter-spacing:-0.25px">SECURITY WARNING</div>
<div class="t" style="left:165px;top:294px;font-size:11.7px;color:#444">Automatic update of links has been disabled</div>
<div class="a" style="left:418px;top:289px;width:112px;height:21px;background:#fff;border:1px solid #c8c8c8"></div>
<div class="t" style="left:433px;top:294px;font-size:11.6px;color:#333">Enable Content</div>
<svg style="left:1316px;top:294px" width="10" height="10"><path d="M1 1l8 8M9 1l-8 8" stroke="#444" stroke-width="1.4"/></svg>

<!--GRID-->
<div class="a" style="left:52px;top:388px;width:966px;height:389px;background:#fff"></div>
<div class="t" style="left:364px;top:577px;font-size:110px;color:#969696;transform:scaleY(1.02);transform-origin:0 0">P</div>
<div class="t" style="left:436px;top:577px;font-size:110px;color:#969696;transform:scaleY(1.02);transform-origin:0 0">a</div>
<div class="t" style="left:495px;top:577px;font-size:110px;color:#969696;transform:scaleY(1.02);transform-origin:0 0">g</div>
<div class="t" style="left:553px;top:577px;font-size:110px;color:#969696;transform:scaleY(1.02);transform-origin:0 0">e</div>
<svg style="left:655px;top:594px" width="31" height="78" viewBox="0 0 31 78"><path d="M17.6 0H30.3V77.5H17.6V17.5C13.5 21.5 7 25 0.3 26.5V14.5C8 12 14 7 17.6 0z" fill="#969696"/></svg>
<div class="a" style="left:52px;top:415.9px;width:966px;height:1px;background:#dcdcdc"></div>
<div class="a" style="left:52px;top:444.5px;width:966px;height:1px;background:#dcdcdc"></div>
<div class="a" style="left:52px;top:473.1px;width:966px;height:1px;background:#dcdcdc"></div>
<div class="a" style="left:52px;top:501.7px;width:966px;height:1px;background:#dcdcdc"></div>
<div class="a" style="left:52px;top:530.3px;width:966px;height:1px;background:#dcdcdc"></div>
<div class="a" style="left:52px;top:558.9px;width:966px;height:1px;background:#dcdcdc"></div>
<div class="a" style="left:52px;top:587.5px;width:966px;height:1px;background:#dcdcdc"></div>
<div class="a" style="left:52px;top:616.1px;width:966px;height:1px;background:#dcdcdc"></div>
<div class="a" style="left:52px;top:644.7px;width:966px;height:1px;background:#dcdcdc"></div>
<div class="a" style="left:52px;top:673.3px;width:966px;height:1px;background:#dcdcdc"></div>
<div class="a" style="left:52px;top:701.9px;width:966px;height:1px;background:#dcdcdc"></div>
<div class="a" style="left:52px;top:730.5px;width:966px;height:1px;background:#dcdcdc"></div>
<div class="a" style="left:52px;top:759.1px;width:966px;height:1px;background:#dcdcdc"></div>
<div class="a" style="left:82px;top:387.8px;width:1px;height:389.2px;background:#dcdcdc"></div>
<div class="a" style="left:130px;top:387.8px;width:1px;height:28.6px;background:#dcdcdc"></div>
<div class="a" style="left:130px;top:445.0px;width:1px;height:28.6px;background:#dcdcdc"></div>
<div class="a" style="left:130px;top:702.4px;width:1px;height:28.6px;background:#dcdcdc"></div>
<div class="a" style="left:130px;top:759.6px;width:1px;height:17.4px;background:#dcdcdc"></div>
<div class="a" style="left:162px;top:387.8px;width:1px;height:28.6px;background:#dcdcdc"></div>
<div class="a" style="left:162px;top:445.0px;width:1px;height:28.6px;background:#dcdcdc"></div>
<div class="a" style="left:162px;top:702.4px;width:1px;height:28.6px;background:#dcdcdc"></div>
<div class="a" style="left:162px;top:759.6px;width:1px;height:17.4px;background:#dcdcdc"></div>
<div class="a" style="left:214px;top:387.8px;width:1px;height:28.6px;background:#dcdcdc"></div>
<div class="a" style="left:214px;top:445.0px;width:1px;height:28.6px;background:#dcdcdc"></div>
<div class="a" style="left:214px;top:588.0px;width:1px;height:28.6px;background:#dcdcdc"></div>
<div class="a" style="left:214px;top:702.4px;width:1px;height:28.6px;background:#dcdcdc"></div>
<div class="a" style="left:214px;top:759.6px;width:1px;height:17.4px;background:#dcdcdc"></div>
<div class="a" style="left:313px;top:387.8px;width:1px;height:85.8px;background:#dcdcdc"></div>
<div class="a" style="left:313px;top:559.4px;width:1px;height:114.4px;background:#dcdcdc"></div>
<div class="a" style="left:313px;top:702.4px;width:1px;height:28.6px;background:#dcdcdc"></div>
<div class="a" style="left:313px;top:759.6px;width:1px;height:17.4px;background:#dcdcdc"></div>
<div class="a" style="left:500px;top:387.8px;width:1px;height:343.2px;background:#dcdcdc"></div>
<div class="a" style="left:500px;top:759.6px;width:1px;height:17.4px;background:#dcdcdc"></div>
<div class="a" style="left:728px;top:387.8px;width:1px;height:389.2px;background:#dcdcdc"></div>
<div class="a" style="left:772px;top:387.8px;width:1px;height:286.0px;background:#dcdcdc"></div>
<div class="a" style="left:772px;top:702.4px;width:1px;height:74.6px;background:#dcdcdc"></div>
<div class="a" style="left:4px;top:359px;width:1312px;height:29px;background:#e6e6e6"></div>
<div class="a" style="left:4px;top:387px;width:1312px;height:1px;background:#ababab"></div>
<svg style="left:28px;top:363px" width="22" height="22" viewBox="0 0 22 22"><path d="M21 1v20H1z" fill="#bdbdbd"/></svg>
<div class="a" style="left:82px;top:363px;width:1px;height:24px;background:#c6c6c6"></div>
<div class="t" style="left:52px;top:363px;width:30px;text-align:center;font-size:22px;color:#111">A</div>
<div class="a" style="left:130px;top:363px;width:1px;height:24px;background:#c6c6c6"></div>
<div class="t" style="left:82px;top:363px;width:48px;text-align:center;font-size:22px;color:#111">B</div>
<div class="a" style="left:162px;top:363px;width:1px;height:24px;background:#c6c6c6"></div>
<div class="t" style="left:130px;top:363px;width:32px;text-align:center;font-size:22px;color:#111">C</div>
<div class="a" style="left:214px;top:363px;width:1px;height:24px;background:#c6c6c6"></div>
<div class="t" style="left:162px;top:363px;width:52px;text-align:center;font-size:22px;color:#111">D</div>
<div class="a" style="left:313px;top:363px;width:1px;height:24px;background:#c6c6c6"></div>
<div class="t" style="left:214px;top:363px;width:99px;text-align:center;font-size:22px;color:#111">E</div>
<div class="a" style="left:500px;top:363px;width:1px;height:24px;background:#c6c6c6"></div>
<div class="t" style="left:313px;top:363px;width:187px;text-align:center;font-size:22px;color:#111">F</div>
<div class="a" style="left:728px;top:363px;width:1px;height:24px;background:#c6c6c6"></div>
<div class="t" style="left:500px;top:363px;width:228px;text-align:center;font-size:22px;color:#111">G</div>
<div class="a" style="left:728px;top:359.5px;width:44px;height:28px;background:#d2d2d2"></div>
<div class="a" style="left:728px;top:386px;width:44px;height:2px;background:#217346"></div>
<div class="a" style="left:772px;top:363px;width:1px;height:24px;background:#c6c6c6"></div>
<div class="t" style="left:728px;top:363px;width:44px;text-align:center;font-size:22px;color:#217346">H</div>
<div class="a" style="left:1018px;top:363px;width:1px;height:24px;background:#c6c6c6"></div>
<div class="t" style="left:772px;top:363px;width:246px;text-align:center;font-size:22px;color:#111">I</div>
<div class="a" style="left:1126px;top:363px;width:1px;height:24px;background:#c6c6c6"></div>
<div class="t" style="left:1018px;top:363px;width:108px;text-align:center;font-size:22px;color:#111">J</div>
<div class="a" style="left:1234px;top:363px;width:1px;height:24px;background:#c6c6c6"></div>
<div class="t" style="left:1126px;top:363px;width:108px;text-align:center;font-size:22px;color:#111">K</div>
<div class="a" style="left:1316px;top:363px;width:1px;height:24px;background:#c6c6c6"></div>
<div class="t" style="left:1234px;top:363px;width:108px;text-align:center;font-size:22px;color:#111">L</div>
<div class="a" style="left:51px;top:363px;width:1px;height:24px;background:#c6c6c6"></div>
<div class="a" style="left:4px;top:388px;width:47px;height:389px;background:#e6e6e6"></div>
<div class="a" style="left:4px;top:415.9px;width:47px;height:1px;background:#c8c8c8"></div>
<div class="t" style="left:4px;top:390.4px;width:47px;text-align:center;font-size:22px;color:#111">13</div>
<div class="a" style="left:4px;top:444.5px;width:47px;height:1px;background:#c8c8c8"></div>
<div class="t" style="left:4px;top:419.0px;width:47px;text-align:center;font-size:22px;color:#111">14</div>
<div class="a" style="left:4px;top:473.1px;width:47px;height:1px;background:#c8c8c8"></div>
<div class="t" style="left:4px;top:447.6px;width:47px;text-align:center;font-size:22px;color:#111">15</div>
<div class="a" style="left:4px;top:501.7px;width:47px;height:1px;background:#c8c8c8"></div>
<div class="t" style="left:4px;top:476.2px;width:47px;text-align:center;font-size:22px;color:#111">16</div>
<div class="a" style="left:4px;top:530.3px;width:47px;height:1px;background:#c8c8c8"></div>
<div class="t" style="left:4px;top:504.8px;width:47px;text-align:center;font-size:22px;color:#111">17</div>
<div class="a" style="left:4px;top:558.9px;width:47px;height:1px;background:#c8c8c8"></div>
<div class="t" style="left:4px;top:533.4px;width:47px;text-align:center;font-size:22px;color:#111">18</div>
<div class="a" style="left:4px;top:587.5px;width:47px;height:1px;background:#c8c8c8"></div>
<div class="t" style="left:4px;top:562.0px;width:47px;text-align:center;font-size:22px;color:#111">19</div>
<div class="a" style="left:4px;top:616.1px;width:47px;height:1px;background:#c8c8c8"></div>
<div class="t" style="left:4px;top:590.6px;width:47px;text-align:center;font-size:22px;color:#111">20</div>
<div class="a" style="left:4px;top:616.6px;width:47px;height:28.6px;background:#d2d2d2"></div>
<div class="a" style="left:4px;top:644.7px;width:47px;height:1px;background:#c8c8c8"></div>
<div class="t" style="left:4px;top:619.2px;width:47px;text-align:center;font-size:22px;color:#217346">21</div>
<div class="a" style="left:4px;top:673.3px;width:47px;height:1px;background:#c8c8c8"></div>
<div class="t" style="left:4px;top:647.8px;width:47px;text-align:center;font-size:22px;color:#111">22</div>
<div class="a" style="left:4px;top:701.9px;width:47px;height:1px;background:#c8c8c8"></div>
<div class="t" style="left:4px;top:676.4px;width:47px;text-align:center;font-size:22px;color:#111">23</div>
<div class="a" style="left:4px;top:730.5px;width:47px;height:1px;background:#c8c8c8"></div>
<div class="t" style="left:4px;top:705.0px;width:47px;text-align:center;font-size:22px;color:#111">24</div>
<div class="a" style="left:4px;top:759.1px;width:47px;height:1px;background:#c8c8c8"></div>
<div class="t" style="left:4px;top:733.6px;width:47px;text-align:center;font-size:22px;color:#111">25</div>
<div class="a" style="left:4px;top:787.7px;width:47px;height:1px;background:#c8c8c8"></div>
<div class="t" style="left:4px;top:762.2px;width:47px;text-align:center;font-size:22px;color:#111">26</div>
<div class="a" style="left:51px;top:388px;width:2px;height:389px;background:#5b5fc7"></div>
<div class="a" style="left:49px;top:616.6px;width:3px;height:28.6px;background:#217346"></div>
<div class="a" style="left:1017px;top:388px;width:3px;height:389px;background:#1c1ca8"></div>
<div class="a" style="left:1020px;top:388px;width:296px;height:389px;background:#a0a0a0"></div>
<div class="t" style="left:55px;top:419.8px;font-size:22px;color:#111;">III</div>
<div class="t" style="left:86px;top:419.8px;font-size:22px;color:#111;letter-spacing:0.66px">LABA BRUTO</div>
<div class="t" style="left:741px;top:419.8px;font-size:22px;color:#111;transform:scaleX(1.09);transform-origin:0 0">Rp</div>
<div class="t" style="left:783px;top:419.8px;font-size:22px;color:#111;transform:scaleX(1.08);transform-origin:0 0">Rp</div>
<div class="t" style="left:707px;top:419.8px;width:300px;text-align:right;font-size:22px;color:#111;letter-spacing:0.8px">110.000.000</div>
<div class="t" style="left:55px;top:477.0px;font-size:22px;color:#111;letter-spacing:1px">IV</div>
<div class="t" style="left:86px;top:477.0px;font-size:22px;color:#111;letter-spacing:0.62px">BIAYA-BIAYA USAHA :</div>
<div class="a" style="left:86.8px;top:517px;width:7px;height:2px;background:#222"></div>
<div class="t" style="left:105.5px;top:505.6px;font-size:22px;color:#111;letter-spacing:0.07px">Gaji Karyawan Bag. Adm. Dan Umum</div>
<div class="t" style="left:512px;top:505.6px;font-size:22px;color:#111;transform:scaleX(1.09);transform-origin:0 0">Rp</div>
<div class="a" style="left:709.3px;top:517px;width:7px;height:2px;background:#222"></div>
<div class="a" style="left:86.8px;top:546px;width:7px;height:2px;background:#222"></div>
<div class="t" style="left:105.5px;top:534.2px;font-size:22px;color:#111;letter-spacing:0.31px">Biaya Listrik, Telepon, Air</div>
<div class="t" style="left:512px;top:534.2px;font-size:22px;color:#111;transform:scaleX(1.09);transform-origin:0 0">Rp</div>
<div class="a" style="left:709.3px;top:546px;width:7px;height:2px;background:#222"></div>
<div class="a" style="left:86.8px;top:574px;width:7px;height:2px;background:#222"></div>
<div class="t" style="left:105.5px;top:562.8px;font-size:22px;color:#111;letter-spacing:0.29px">Biaya Administrasi</div>
<div class="t" style="left:512px;top:562.8px;font-size:22px;color:#111;transform:scaleX(1.09);transform-origin:0 0">Rp</div>
<div class="a" style="left:709.3px;top:574px;width:7px;height:2px;background:#222"></div>
<div class="a" style="left:86.8px;top:603px;width:7px;height:2px;background:#222"></div>
<div class="t" style="left:105.5px;top:591.4px;font-size:22px;color:#111;letter-spacing:0.65px">Biaya ATK</div>
<div class="t" style="left:512px;top:591.4px;font-size:22px;color:#111;transform:scaleX(1.09);transform-origin:0 0">Rp</div>
<div class="a" style="left:709.3px;top:603px;width:7px;height:2px;background:#222"></div>
<div class="a" style="left:86.8px;top:632px;width:7px;height:2px;background:#222"></div>
<div class="t" style="left:105.5px;top:620.0px;font-size:22px;color:#111;letter-spacing:0.27px">Biaya Lain-Lain</div>
<div class="a" style="left:86.8px;top:660px;width:7px;height:2px;background:#222"></div>
<div class="t" style="left:105.5px;top:648.6px;font-size:22px;color:#111;letter-spacing:0.13px">Biaya Penyusutan</div>
<div class="t" style="left:104.5px;top:677.2px;font-size:22px;color:#111;letter-spacing:0.65px">TOTAL BIAYA USAHA</div>
<div class="t" style="left:743px;top:677.2px;font-size:22px;color:#111;transform:scaleX(1.09);transform-origin:0 0">Rp</div>
<div class="a" style="left:999px;top:689px;width:7px;height:2px;background:#222"></div>
<div class="a" style="left:728px;top:700.9px;width:290px;height:2px;background:#222"></div>
<div class="t" style="left:56px;top:734.4px;font-size:22px;color:#111;">V</div>
<div class="t" style="left:86px;top:734.4px;font-size:22px;color:#111;letter-spacing:0.43px">LABA BERSIH USAHA SEBELUM PAJAK</div>
<div class="t" style="left:741px;top:734.4px;font-size:22px;color:#111;transform:scaleX(1.09);transform-origin:0 0">Rp</div>
<div class="a" style="left:727px;top:615.6px;width:46px;height:30.1px;border:2px solid #217346"></div>
<div class="a" style="left:768px;top:642.2px;width:6px;height:6px;background:#217346;border:1px solid #fff"></div>
<svg style="left:760px;top:648px" width="16" height="16" viewBox="0 0 16 16"><path d="M5.5 1h5v4.5H15v5h-4.5V15h-5v-4.5H1v-5h4.5z" fill="#fff" stroke="#111" stroke-width="1.2"/></svg>
<!--/GRID-->


<!-- ===== FORMULA BAR ===== -->
<div class="a" style="left:10px;top:325px;width:99px;height:24px;background:#fff;border:1px solid #dadada"></div>
<div class="t" style="left:16px;top:331.6px;font-size:12px;color:#333">H21</div>
<svg style="left:95px;top:334px" width="8" height="5"><path d="M0 0h8L4 4.5z" fill="#666"/></svg>
<svg style="left:123px;top:332px" width="4" height="12"><circle cx="2" cy="1.5" r="1" fill="#999"/><circle cx="2" cy="5.5" r="1" fill="#999"/><circle cx="2" cy="9.5" r="1" fill="#999"/></svg>
<div class="a" style="left:140px;top:325px;width:108px;height:24px;background:#fff;border:1px solid #dadada"></div>
<svg style="left:153px;top:332px" width="11" height="11"><path d="M1 1l9 9M10 1l-9 9" stroke="#aaa" stroke-width="1.1"/></svg>
<svg style="left:188px;top:332px" width="13" height="11"><path d="M1 6l4 4 7-9" fill="none" stroke="#b5b5b5" stroke-width="1.2"/></svg>
<div class="t" style="left:224px;top:329px;font-size:13px;font-style:italic;color:#555;font-family:'Liberation Serif'">f<span style="font-size:10px">x</span></div>
<div class="a" style="left:252px;top:325px;width:1079px;height:24px;background:#fff;border:1px solid #dadada"></div>
<svg style="left:1319px;top:334px" width="9" height="6"><path d="M1 1l3.5 3.5L8 1" fill="none" stroke="#666" stroke-width="1.3"/></svg>

<!-- ===== VERTICAL SCROLLBAR ===== -->
<div class="a" style="left:1316px;top:359px;width:18px;height:418px;background:#e8e8e8"></div>
<div class="a" style="left:1318px;top:362px;width:15px;height:14px;background:#fff;border:1px solid #cfcfcf"></div>
<svg style="left:1321px;top:366px" width="9" height="6"><path d="M0 5h9L4.5 0z" fill="#666"/></svg>
<div class="a" style="left:1319px;top:487px;width:14px;height:119px;background:#fff;border:1px solid #c8c8c8"></div>
<div class="a" style="left:1318px;top:763px;width:15px;height:14px;background:#fff;border:1px solid #cfcfcf"></div>
<svg style="left:1321px;top:768px" width="9" height="6"><path d="M0 0h9L4.5 5z" fill="#666"/></svg>

<!-- ===== SHEET TABS ===== -->
<div class="a" style="left:4px;top:777px;width:1331px;height:29px;background:#e6e6e6;border-top:1px solid #c6c6c6;border-bottom:1px solid #d0d0d0"></div>
<svg style="left:30px;top:786px" width="6" height="9"><path d="M5 0v9L0 4.5z" fill="#c4c4c4"/></svg>
<svg style="left:59px;top:786px" width="6" height="9"><path d="M0 0v9l5-4.5z" fill="#c4c4c4"/></svg>
<div class="a" style="left:103px;top:777px;width:85px;height:25px;background:#f3f9f5"></div>
<div class="a" style="left:103px;top:800px;width:85px;height:2.5px;background:#2e7d55"></div>
<div class="t" style="left:115px;top:785px;font-size:12.5px;font-weight:700;color:#217346;letter-spacing:-0.2px">Laba-Rugi</div>
<div class="a" style="left:188px;top:778px;width:188px;height:27px;background:#e4efde"></div>
<div class="t" style="left:200px;top:785px;font-size:12.5px;color:#222">Neraca Keu</div>
<div class="a" style="left:280px;top:781px;width:1px;height:20px;background:#c4c4c4"></div>
<div class="t" style="left:295px;top:785px;font-size:12.5px;color:#222">Penyusutan</div>
<div class="a" style="left:375px;top:781px;width:1px;height:20px;background:#c4c4c4"></div>
<div class="t" style="left:390px;top:785px;font-size:12.5px;color:#666">Final-Badan</div>
<div class="a" style="left:471px;top:781px;width:1px;height:20px;background:#c4c4c4"></div>
<div class="t" style="left:484px;top:785px;font-size:12.5px;color:#666">Sheet2</div>
<div class="a" style="left:534px;top:781px;width:1px;height:20px;background:#c4c4c4"></div>
<svg style="left:567px;top:783px" width="17" height="17" viewBox="0 0 17 17"><circle cx="8.5" cy="8.5" r="7.3" fill="none" stroke="#777" stroke-width="1.2"/><path d="M8.5 4.5v8M4.5 8.5h8" stroke="#777" stroke-width="1.3"/></svg>
<svg style="left:803px;top:785px" width="4" height="13"><circle cx="2" cy="1.5" r="1" fill="#aaa"/><circle cx="2" cy="6.5" r="1" fill="#aaa"/><circle cx="2" cy="11.5" r="1" fill="#aaa"/></svg>
<div class="a" style="left:821px;top:785px;width:494px;height:14px;background:#dcdcdc;border:1px solid #cfcfcf"></div>
<div class="a" style="left:821px;top:785px;width:15px;height:14px;background:#fff;border:1px solid #cfcfcf"></div>
<svg style="left:826px;top:788px" width="5" height="8"><path d="M5 0v8L0 4z" fill="#555"/></svg>
<div class="a" style="left:836px;top:785px;width:120px;height:14px;background:#fff;border:1px solid #c8c8c8"></div>
<div class="a" style="left:1300px;top:785px;width:15px;height:14px;background:#fff;border:1px solid #cfcfcf"></div>
<svg style="left:1305px;top:788px" width="5" height="8"><path d="M0 0v8l5-4z" fill="#555"/></svg>

<!-- ===== STATUS BAR ===== -->
<div class="a" style="left:4px;top:806px;width:1331px;height:21px;background:#f3f3f3"></div>
<div class="t" style="left:13px;top:810px;font-size:11px;color:#444">Ready</div>
<svg style="left:1042px;top:808px" width="14" height="14" viewBox="0 0 14 14"><path d="M1 1h12v12H1zM1 5h12M1 9h12M5 1v12M9 1v12" fill="none" stroke="#444" stroke-width="1.1"/></svg>
<svg style="left:1081px;top:808px" width="15" height="14" viewBox="0 0 15 14"><rect x="0.6" y="0.6" width="13.8" height="12.8" fill="none" stroke="#444" stroke-width="1.1"/><rect x="3.5" y="3" width="8" height="8" fill="none" stroke="#444"/><path d="M5 5.5h5M5 7.5h5" stroke="#444"/></svg>
<div class="a" style="left:1108px;top:805px;width:39px;height:22px;background:#d8d8d8"></div>
<svg style="left:1120px;top:808px" width="15" height="14" viewBox="0 0 15 14"><rect x="0.6" y="0.6" width="13.8" height="12.8" fill="none" stroke="#444" stroke-width="1.1"/><path d="M0.6 9.5h13.8M7.5 0.6v9" stroke="#444" stroke-width="1.1"/></svg>
<div class="a" style="left:1153px;top:815px;width:8px;height:1.3px;background:#555"></div>
<div class="a" style="left:1166px;top:815.5px;width:98px;height:1px;background:#bbb"></div>
<div class="a" style="left:1216px;top:812px;width:1px;height:8px;background:#999"></div>
<div class="a" style="left:1225px;top:810px;width:5px;height:11px;background:#666"></div>
<div class="a" style="left:1269px;top:815px;width:9px;height:1.3px;background:#555"></div>
<div class="a" style="left:1273px;top:811px;width:1.3px;height:9px;background:#555"></div>
<div class="t" style="left:1291px;top:811px;font-size:10.5px;color:#555">170%</div>
<svg style="left:1329px;top:826px" width="4" height="4"><path d="M4 0v4H0z" fill="#444"/></svg>
<div class="a" style="left:4px;top:823px;width:5px;height:4px;border-left:2px solid #222;border-bottom:2px solid #222"></div>
<!-- name tag -->
<div class="a" style="left:13px;top:811px;width:123px;height:26px;background:rgba(95,95,95,0.86);border-radius:5px"></div>
<div class="t" style="left:13px;top:810px;font-size:11px;color:rgba(40,40,40,0.7)">Ready</div>
<div class="t" style="left:19.5px;top:818px;font-size:13.1px;color:#fff">irzarani nabilla</div>
<svg style="left:112px;top:816px" width="16" height="16" viewBox="0 0 16 16"><rect x="5.5" y="1" width="5" height="8.5" rx="2.5" fill="none" stroke="#fff" stroke-width="1.1"/><path d="M3 7.5a5 5 0 0 0 10 0M8 12.5v2.5" fill="none" stroke="#fff" stroke-width="1.1"/><path d="M2 1.5l12 13" stroke="#fff" stroke-width="1.1"/></svg>
<div class="a" style="left:0;top:850px;width:1600px;height:1px;background:#ecdcdc"></div>

<div class="a" style="left:4px;top:160px;width:1px;height:667px;background:#c9dfd1"></div>
<!-- ===== PARTICIPANTS PANEL ===== -->
<div class="a" style="left:1338px;top:138px;width:128px;height:94.5px;border-radius:5px;overflow:hidden;background:linear-gradient(90deg,#dcdcde 0%,#ececee 40%,#f4f4f6 100%)"><div class="a" style="left:2px;top:2px;width:20px;height:12px;border-radius:50%;background:#8a8a8a;filter:blur(3px)"></div><div class="a" style="left:88px;top:0px;width:22px;height:8px;border-radius:50%;background:#777;filter:blur(3px)"></div><div class="a" style="left:10px;top:70px;width:30px;height:30px;background:#d4d4d6;filter:blur(3px)"></div><div class="a" style="left:82px;top:66px;width:30px;height:34px;border-radius:45% 45% 0 0;background:#f6f6f6;filter:blur(1px)"></div><div class="a" style="left:39px;top:12px;width:40px;height:58px;border-radius:50% 50% 35% 35%;background:#4a4a4c;filter:blur(0.7px)"></div><div class="a" style="left:26px;top:58px;width:66px;height:42px;border-radius:45% 45% 0 0;background:#4a4a4c;filter:blur(0.7px)"></div><div class="a" style="left:47px;top:25px;width:25px;height:36px;border-radius:45% 45% 50% 50%;background:#d2ab98;filter:blur(0.6px)"></div><div class="a" style="left:51px;top:36px;width:6px;height:2px;background:#4a3530;filter:blur(0.4px)"></div><div class="a" style="left:62px;top:36px;width:6px;height:2px;background:#4a3530;filter:blur(0.4px)"></div><div class="a" style="left:56px;top:53px;width:8px;height:3px;border-radius:50%;background:#a8423c;filter:blur(0.4px)"></div></div>
<div class="a" style="left:1342px;top:202px;width:30px;height:26px;background:#727272;border-radius:4px"></div>
<svg style="left:1350.0px;top:208.0px" width="14" height="14" viewBox="0 0 14 14"><rect x="4.8" y="0.8" width="4.4" height="7.5" rx="2.2" fill="none" stroke="#fff" stroke-width="1.1"/><path d="M2.5 6.5a4.5 4.5 0 0 0 9 0M7 11v2.5" fill="none" stroke="#fff" stroke-width="1.1"/><path d="M1.5 1.5l11 11.5" stroke="#fff" stroke-width="1.1"/></svg>
<div class="a" style="left:1470px;top:138px;width:128px;height:94.5px;background:linear-gradient(135deg,#f3efe6,#f1f0ec);border:1px solid #e4e1dc;border-radius:5px"></div>
<div class="a" style="left:1507px;top:159px;width:52px;height:52px;border-radius:50%;background:#dcd8ee;box-shadow:0 1px 3px rgba(0,0,0,0.12)"></div>
<div class="t" style="left:1507px;top:175.6px;width:52px;text-align:center;font-size:18px;font-weight:400;-webkit-text-stroke:0.55px #2a2a6a;color:#2a2a6a">SB</div>
<div class="a" style="left:1474px;top:202px;width:30px;height:26px;background:#727272;border-radius:4px"></div>
<svg style="left:1482.0px;top:208.0px" width="14" height="14" viewBox="0 0 14 14"><rect x="4.8" y="0.8" width="4.4" height="7.5" rx="2.2" fill="none" stroke="#fff" stroke-width="1.1"/><path d="M2.5 6.5a4.5 4.5 0 0 0 9 0M7 11v2.5" fill="none" stroke="#fff" stroke-width="1.1"/><path d="M1.5 1.5l11 11.5" stroke="#fff" stroke-width="1.1"/></svg>
<div class="a" style="left:1338px;top:236.5px;width:128px;height:94.5px;background:linear-gradient(135deg,#f4f1e6,#f3eeec);border:1px solid #e4e1dc;border-radius:5px"></div>
<div class="a" style="left:1376px;top:258px;width:52px;height:52px;border-radius:50%;background:#cdeede;box-shadow:0 1px 3px rgba(0,0,0,0.12)"></div>
<div class="t" style="left:1376px;top:274.1px;width:52px;text-align:center;font-size:19px;font-weight:400;-webkit-text-stroke:0.55px #1f5d3c;color:#1f5d3c">A</div>
<div class="a" style="left:1342px;top:300px;width:30px;height:26px;background:#727272;border-radius:4px"></div>
<svg style="left:1350.0px;top:306.0px" width="14" height="14" viewBox="0 0 14 14"><rect x="4.8" y="0.8" width="4.4" height="7.5" rx="2.2" fill="none" stroke="#fff" stroke-width="1.1"/><path d="M2.5 6.5a4.5 4.5 0 0 0 9 0M7 11v2.5" fill="none" stroke="#fff" stroke-width="1.1"/><path d="M1.5 1.5l11 11.5" stroke="#fff" stroke-width="1.1"/></svg>
<div class="a" style="left:1469px;top:236.5px;width:129px;height:94.5px;border-radius:7px;border:3.5px solid #5b5fc7;overflow:hidden;background:linear-gradient(90deg,#e6e6e8,#efeff1 50%,#e8e8ea)"><div class="a" style="left:45px;top:1px;width:15px;height:10px;background:#7d7d80;border:2px solid #d0d0d2"></div><div class="a" style="left:24px;top:60px;width:76px;height:40px;border-radius:40% 40% 0 0;background:#e2e2e2"></div><div class="a" style="left:57px;top:60px;width:17px;height:13px;background:#3b3633;clip-path:polygon(0 0,100% 0,55% 100%)"></div><div class="a" style="left:53px;top:27px;width:27px;height:36px;border-radius:40% 40% 50% 50%;background:#c4a896"></div><div class="a" style="left:49px;top:19px;width:33px;height:15px;border-radius:50% 50% 10% 10%;background:#27231f"></div><div class="a" style="left:49px;top:26px;width:5px;height:16px;border-radius:3px;background:#27231f"></div><div class="a" style="left:78px;top:26px;width:4px;height:13px;border-radius:3px;background:#27231f"></div><div class="a" style="left:57px;top:40px;width:20px;height:4px;border-top:1px solid #8a7a70"></div><div class="a" style="left:61px;top:54px;width:10px;height:3px;border-radius:50%;background:#8a5a50"></div></div>
<div class="a" style="left:1375px;top:334.5px;width:56px;height:94.5px;overflow:hidden;background:linear-gradient(180deg,#c0d0da 0%,#c8d5dc 45%,#ced8d8 65%)"><div class="a" style="left:36px;top:62px;width:30px;height:45px;background:#6f8a55;border-radius:50% 0 0 0;filter:blur(1.5px)"></div><div class="a" style="left:-8px;top:38px;width:44px;height:70px;border-radius:45% 55% 0 0;background:radial-gradient(circle at 40% 40%,#dccdb0,#b8986a 70%);filter:blur(1.5px)"></div><div class="a" style="left:26px;top:50px;width:4px;height:50px;background:#e8e0d0;transform:rotate(12deg);filter:blur(1px)"></div><div class="a" style="left:24px;top:74px;width:26px;height:26px;border-radius:50% 0 0 0;background:#d4b050;filter:blur(1px)"></div></div>
<div class="a" style="left:1342px;top:398px;width:30px;height:26px;background:#727272;border-radius:4px"></div>
<svg style="left:1350.0px;top:404.0px" width="14" height="14" viewBox="0 0 14 14"><rect x="4.8" y="0.8" width="4.4" height="7.5" rx="2.2" fill="none" stroke="#fff" stroke-width="1.1"/><path d="M2.5 6.5a4.5 4.5 0 0 0 9 0M7 11v2.5" fill="none" stroke="#fff" stroke-width="1.1"/><path d="M1.5 1.5l11 11.5" stroke="#fff" stroke-width="1.1"/></svg>
<div class="a" style="left:1470px;top:334.5px;width:128px;height:94.5px;background:linear-gradient(135deg,#efedf0,#f2f0ee);border:1px solid #e4e1dc;border-radius:5px"></div>
<div class="a" style="left:1507px;top:356px;width:52px;height:52px;border-radius:50%;background:#d5eff1;box-shadow:0 1px 3px rgba(0,0,0,0.12)"></div>
<div class="t" style="left:1507px;top:372.1px;width:52px;text-align:center;font-size:19px;font-weight:400;-webkit-text-stroke:0.55px #1f5d63;color:#1f5d63">EI</div>
<div class="a" style="left:1474px;top:398px;width:30px;height:26px;background:#727272;border-radius:4px"></div>
<svg style="left:1482.0px;top:404.0px" width="14" height="14" viewBox="0 0 14 14"><rect x="4.8" y="0.8" width="4.4" height="7.5" rx="2.2" fill="none" stroke="#fff" stroke-width="1.1"/><path d="M2.5 6.5a4.5 4.5 0 0 0 9 0M7 11v2.5" fill="none" stroke="#fff" stroke-width="1.1"/><path d="M1.5 1.5l11 11.5" stroke="#fff" stroke-width="1.1"/></svg>
<div class="a" style="left:1338px;top:433px;width:128px;height:94.5px;background:linear-gradient(135deg,#f4efe4,#f3edf0);border:1px solid #e4e1dc;border-radius:5px"></div>
<div class="a" style="left:1376px;top:454px;width:52px;height:52px;border-radius:50%;background:#e1edd9;box-shadow:0 1px 3px rgba(0,0,0,0.12)"></div>
<div class="t" style="left:1376px;top:470.1px;width:52px;text-align:center;font-size:19px;font-weight:400;-webkit-text-stroke:0.55px #48652f;color:#48652f">B</div>
<div class="a" style="left:1342px;top:497px;width:30px;height:26px;background:#727272;border-radius:4px"></div>
<svg style="left:1350.0px;top:503.0px" width="14" height="14" viewBox="0 0 14 14"><rect x="4.8" y="0.8" width="4.4" height="7.5" rx="2.2" fill="none" stroke="#fff" stroke-width="1.1"/><path d="M2.5 6.5a4.5 4.5 0 0 0 9 0M7 11v2.5" fill="none" stroke="#fff" stroke-width="1.1"/><path d="M1.5 1.5l11 11.5" stroke="#fff" stroke-width="1.1"/></svg>
<div class="a" style="left:1470px;top:433px;width:128px;height:94.5px;background:linear-gradient(135deg,#f3ece8,#f1eee6);border:1px solid #e4e1dc;border-radius:5px"></div>
<div class="a" style="left:1507px;top:454px;width:52px;height:52px;border-radius:50%;background:#f6d0e0;box-shadow:0 1px 3px rgba(0,0,0,0.12)"></div>
<div class="t" style="left:1507px;top:470.1px;width:52px;text-align:center;font-size:19px;font-weight:400;-webkit-text-stroke:0.55px #7b1f45;color:#7b1f45">Y</div>
<div class="a" style="left:1474px;top:497px;width:30px;height:26px;background:#727272;border-radius:4px"></div>
<svg style="left:1482.0px;top:503.0px" width="14" height="14" viewBox="0 0 14 14"><rect x="4.8" y="0.8" width="4.4" height="7.5" rx="2.2" fill="none" stroke="#fff" stroke-width="1.1"/><path d="M2.5 6.5a4.5 4.5 0 0 0 9 0M7 11v2.5" fill="none" stroke="#fff" stroke-width="1.1"/><path d="M1.5 1.5l11 11.5" stroke="#fff" stroke-width="1.1"/></svg>
<div class="a" style="left:1338px;top:531px;width:128px;height:94.5px;background:linear-gradient(160deg,#e4ecf4,#eee4ef 60%,#f0e6ee);border:1px solid #e4e1dc;border-radius:5px"></div>
<div class="a" style="left:1376px;top:553px;width:52px;height:52px;border-radius:50%;background:#dedbf0;box-shadow:0 1px 3px rgba(0,0,0,0.12)"></div>
<div class="t" style="left:1376px;top:569.1px;width:52px;text-align:center;font-size:19px;font-weight:400;-webkit-text-stroke:0.55px #3a3a78;color:#3a3a78">A</div>
<div class="a" style="left:1342px;top:595px;width:30px;height:26px;background:#727272;border-radius:4px"></div>
<svg style="left:1350.0px;top:601.0px" width="14" height="14" viewBox="0 0 14 14"><rect x="4.8" y="0.8" width="4.4" height="7.5" rx="2.2" fill="none" stroke="#fff" stroke-width="1.1"/><path d="M2.5 6.5a4.5 4.5 0 0 0 9 0M7 11v2.5" fill="none" stroke="#fff" stroke-width="1.1"/><path d="M1.5 1.5l11 11.5" stroke="#fff" stroke-width="1.1"/></svg>
<div class="a" style="left:1470px;top:531px;width:128px;height:94.5px;background:linear-gradient(135deg,#f1e6e8,#f3ede4);border:1px solid #e4e1dc;border-radius:5px"></div>
<div class="a" style="left:1507px;top:553px;width:52px;height:52px;border-radius:50%;background:#cdeede;box-shadow:0 1px 3px rgba(0,0,0,0.12)"></div>
<div class="t" style="left:1507px;top:569.6px;width:52px;text-align:center;font-size:18px;font-weight:400;-webkit-text-stroke:0.55px #1f5d3c;color:#1f5d3c">JM</div>
<div class="a" style="left:1474px;top:595px;width:30px;height:26px;background:#727272;border-radius:4px"></div>
<svg style="left:1482.0px;top:601.0px" width="14" height="14" viewBox="0 0 14 14"><rect x="4.8" y="0.8" width="4.4" height="7.5" rx="2.2" fill="none" stroke="#fff" stroke-width="1.1"/><path d="M2.5 6.5a4.5 4.5 0 0 0 9 0M7 11v2.5" fill="none" stroke="#fff" stroke-width="1.1"/><path d="M1.5 1.5l11 11.5" stroke="#fff" stroke-width="1.1"/></svg>
<svg style="left:1433px;top:641px" width="9" height="14"><path d="M7.5 1L1.5 7l6 6" fill="none" stroke="#aaa" stroke-width="1.3"/></svg>
<div class="t" style="left:1457px;top:641px;font-size:14px;color:#424242">1/2</div>
<svg style="left:1493px;top:641px" width="9" height="14"><path d="M1.5 1l6 6-6 6" fill="none" stroke="#424242" stroke-width="1.3"/></svg>
<div class="a" style="left:1339px;top:671px;width:258px;height:142px;background:linear-gradient(135deg,#eaf1ee,#f0eeea 60%,#efecea);border:1px solid #e4e1dc;border-radius:5px"></div>
<div class="a" style="left:1432px;top:706px;width:71px;height:71px;border-radius:50%;background:#f4d0c8;box-shadow:0 1px 3px rgba(0,0,0,0.10)"></div>
<div class="t" style="left:1432px;top:727.7px;width:71px;text-align:center;font-size:28px;font-weight:400;-webkit-text-stroke:0.7px #6b2412;color:#6b2412">NL</div>
<div class="a" style="left:1346px;top:779px;width:31px;height:26px;background:#727272;border-radius:4px"></div>
<svg style="left:1354.5px;top:785.0px" width="14" height="14" viewBox="0 0 14 14"><rect x="4.8" y="0.8" width="4.4" height="7.5" rx="2.2" fill="none" stroke="#fff" stroke-width="1.1"/><path d="M2.5 6.5a4.5 4.5 0 0 0 9 0M7 11v2.5" fill="none" stroke="#fff" stroke-width="1.1"/><path d="M1.5 1.5l11 11.5" stroke="#fff" stroke-width="1.1"/></svg>
</body></html>
